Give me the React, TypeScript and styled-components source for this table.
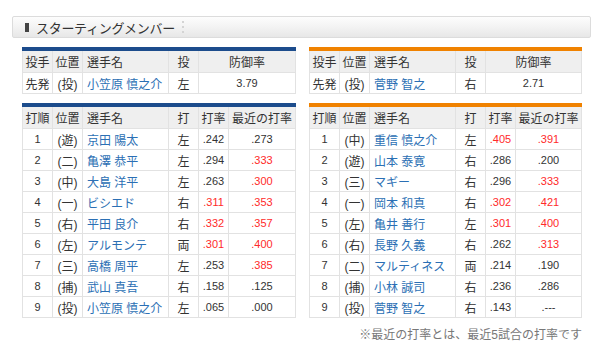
import React from 'react';
import styled, { createGlobalStyle } from 'styled-components';

const GlobalStyle = createGlobalStyle`
  body {
    margin: 0;
    background: #fff;
    font-family: 'Liberation Sans', 'Noto Sans CJK JP', sans-serif;
    color: #333;
  }
`;

const Page = styled.div`
  width: 600px;
  height: 354px;
  padding-top: 16px;
  box-sizing: border-box;
`;

const TitleBar = styled.div`
  margin-left: 12px;
  width: 579px;
  height: 22px;
  box-sizing: border-box;
  border: 1px solid #dcdcdc;
  border-radius: 2px;
  background: linear-gradient(#fdfdfd, #f3f3f3 50%, #e7e7e7);
  display: flex;
  align-items: center;
  padding-left: 12px;
  gap: 7px;
`;

const TitleMark = styled.span`
  width: 4px;
  height: 9px;
  background: #444;
`;

const TitleText = styled.span`
  font-size: 13px;
  color: #333;
  letter-spacing: -0.3px;
`;

const TitleDots = styled.span`
  width: 2px;
  height: 12px;
  background: repeating-linear-gradient(#d4d4d4 0 2px, transparent 2px 5px);
`;

const Columns = styled.div`
  display: grid;
  grid-template-columns: 274px 273px;
  column-gap: 13px;
  padding-left: 22px;
  margin-top: 9px;
`;

const Side = styled.div`
  display: flex;
  flex-direction: column;
  gap: 9px;
`;

const Table = styled.table<{ $accent: string }>`
  width: 100%;
  border-collapse: collapse;
  border-top: 4px solid ${p => p.$accent};
  table-layout: fixed;
  font-size: 12px;

  th, td {
    border: 1px solid #e2e2e2;
    height: 20px;
    padding: 0;
    text-align: center;
    white-space: nowrap;
  }
  th {
    background: #efefef;
    font-weight: normal;
    height: 21px;
    color: #333;
  }
  tr:first-child th {
    border-top: none;
  }
`;

const NameHead = styled.th`
  && {
    text-align: left;
    padding-left: 4px;
  }
`;

const NameCell = styled.td`
  && {
    text-align: left;
    padding-left: 4px;
    color: #2b6fb4;
  }
`;

const NumCell = styled.td<{ $hot?: boolean }>`
  && {
    font-size: 11px;
    color: ${p => (p.$hot ? '#ff2a2a' : '#333')};
  }
`;

const Note = styled.div`
  width: 582px;
  text-align: right;
  font-size: 12px;
  color: #777;
  margin-top: 7px;
`;

type Batter = [string, string, string, string, string, string];
type Pitcher = [string, string, string, string, string];

const pitchers: Pitcher[] = [
  ['先発', '(投)', '小笠原 慎之介', '左', '3.79'],
  ['先発', '(投)', '菅野 智之', '右', '2.71'],
];

const leftBatters: Batter[] = [
  ['1', '(遊)', '京田 陽太', '左', '.242', '.273'],
  ['2', '(二)', '亀澤 恭平', '左', '.294', '.333'],
  ['3', '(中)', '大島 洋平', '左', '.263', '.300'],
  ['4', '(一)', 'ビシエド', '右', '.311', '.353'],
  ['5', '(右)', '平田 良介', '右', '.332', '.357'],
  ['6', '(左)', 'アルモンテ', '両', '.301', '.400'],
  ['7', '(三)', '高橋 周平', '左', '.253', '.385'],
  ['8', '(捕)', '武山 真吾', '右', '.158', '.125'],
  ['9', '(投)', '小笠原 慎之介', '左', '.065', '.000'],
];

const rightBatters: Batter[] = [
  ['1', '(中)', '重信 慎之介', '左', '.405', '.391'],
  ['2', '(遊)', '山本 泰寛', '右', '.286', '.200'],
  ['3', '(三)', 'マギー', '右', '.296', '.333'],
  ['4', '(一)', '岡本 和真', '右', '.302', '.421'],
  ['5', '(左)', '亀井 善行', '左', '.301', '.400'],
  ['6', '(右)', '長野 久義', '右', '.262', '.313'],
  ['7', '(二)', 'マルティネス', '両', '.214', '.190'],
  ['8', '(捕)', '小林 誠司', '右', '.236', '.286'],
  ['9', '(投)', '菅野 智之', '右', '.143', '.---'],
];

// .300 and over shows in red
const hot = (v: string) => parseFloat(v) >= 0.3;

function PitcherTable({ row, accent }: { row: Pitcher; accent: string }) {
  return (
    <Table $accent={accent}>
      <colgroup>
        <col style={{ width: 30 }} />
        <col style={{ width: 30 }} />
        <col style={{ width: 86 }} />
        <col style={{ width: 30 }} />
        <col />
      </colgroup>
      <thead>
        <tr>
          <th>投手</th>
          <th>位置</th>
          <NameHead>選手名</NameHead>
          <th>投</th>
          <th>防御率</th>
        </tr>
      </thead>
      <tbody>
        <tr>
          <td>{row[0]}</td>
          <td>{row[1]}</td>
          <NameCell>{row[2]}</NameCell>
          <td>{row[3]}</td>
          <NumCell>{row[4]}</NumCell>
        </tr>
      </tbody>
    </Table>
  );
}

function BatterTable({ rows, accent }: { rows: Batter[]; accent: string }) {
  return (
    <Table $accent={accent}>
      <colgroup>
        <col style={{ width: 30 }} />
        <col style={{ width: 30 }} />
        <col style={{ width: 86 }} />
        <col style={{ width: 30 }} />
        <col style={{ width: 30 }} />
        <col />
      </colgroup>
      <thead>
        <tr>
          <th>打順</th>
          <th>位置</th>
          <NameHead>選手名</NameHead>
          <th>打</th>
          <th>打率</th>
          <th>最近の打率</th>
        </tr>
      </thead>
      <tbody>
        {rows.map(r => (
          <tr key={r[0]}>
            <NumCell>{r[0]}</NumCell>
            <td>{r[1]}</td>
            <NameCell>{r[2]}</NameCell>
            <td>{r[3]}</td>
            <NumCell $hot={hot(r[4])}>{r[4]}</NumCell>
            <NumCell $hot={hot(r[5])}>{r[5]}</NumCell>
          </tr>
        ))}
      </tbody>
    </Table>
  );
}

export default function App() {
  return (
    <>
      <GlobalStyle />
      <Page>
        <TitleBar>
          <TitleMark />
          <TitleText>スターティングメンバー</TitleText>
          <TitleDots />
        </TitleBar>
        <Columns>
          <Side>
            <PitcherTable row={pitchers[0]} accent="#1c4c8c" />
            <BatterTable rows={leftBatters} accent="#1c4c8c" />
          </Side>
          <Side>
            <PitcherTable row={pitchers[1]} accent="#f08200" />
            <BatterTable rows={rightBatters} accent="#f08200" />
          </Side>
        </Columns>
        <Note>※最近の打率とは、最近5試合の打率です</Note>
      </Page>
    </>
  );
}
